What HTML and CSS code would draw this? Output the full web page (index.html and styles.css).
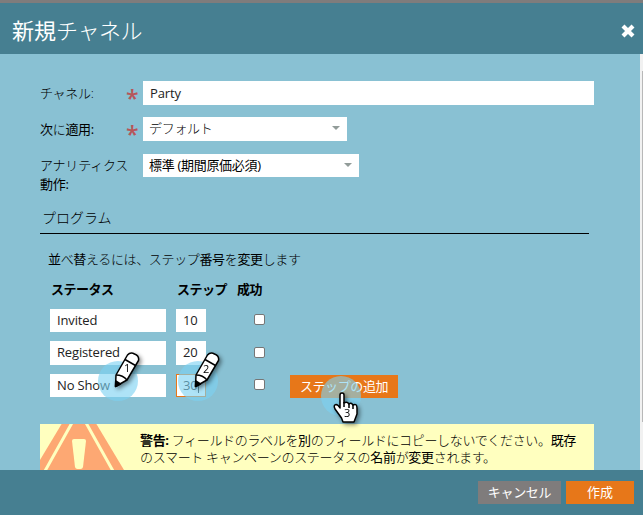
FILE: index.html
```html
<!DOCTYPE html>
<html lang="ja">
<head>
<meta charset="utf-8">
<title>新規チャネル</title>
<link rel="stylesheet" href="styles.css">
</head>
<body>
<div class="dialog">
  <header class="header">
    <h1>新規<span class="kana">チャネル</span></h1>
    <svg class="close" width="14" height="14" viewBox="0 0 14 14"><path d="M2 2l10 10M12 2l-10 10"/></svg>
  </header>
  <main class="body">
    <div class="row row-name"><label class="k">チャネル:</label><b class="star">*</b><div class="field latin">Party</div></div>
    <div class="row row-apply"><label>次<span class="kana">に</span>適用:</label><b class="star">*</b><div class="field select"><span class="k">デフォルト</span><i class="arrow"></i></div></div>
    <div class="row row-analytics"><label><span class="k wide">アナリティクス</span><br>動作:</label><b class="star"></b><div class="field select"><span class="behavior">標準 (期間原価必須)</span><i class="arrow"></i></div></div>
    <h2 class="k">プログラム</h2>
    <p class="hint">並<span class="kana">べ</span>替<span class="kana">えるには、ステップ</span>番号<span class="kana">を</span>変更<span class="kana">します</span></p>
    <div class="steps">
      <strong>ステータス</strong><strong>ステップ</strong><strong>成功</strong><span></span>
      <div class="field latin">Invited</div><div class="field latin num">10</div><i class="check"></i><span></span>
      <div class="field tall latin">Registered</div><div class="field tall latin num">20</div><i class="check low"></i><span></span>
      <div class="field latin">No Show</div><div class="field latin num focus">30<i class="caret"></i></div><i class="check"></i><div class="button add"><span>ステップの追加</span></div>
    </div>
    <div class="warning">
      <svg class="sign" width="90" height="46" viewBox="0 0 90 46"><path class="tri" d="M24 -4H54L84 46H-6Z"/><path class="inner" d="M5 47L33 -3M73 47L45 -3"/><path class="mark" d="M34 15H44Q46 15 46 17L43 43Q42.500 45 40.500 45H37.500Q35.500 45 35 43L32 17Q32 15 34 15Z"/></svg>
      <p><span class="line one"><b>警告:</b> <span class="kana">フィールドのラベルを</span>別<span class="kana">のフィールドにコピーしないでください。</span>既存</span><span class="line two"><span class="kana">のスマート キャンペーンのステータスの</span>名前<span class="kana">が</span>変更<span class="kana">されます。</span></span></p>
    </div>
    <div class="scroll"><i></i></div>
  </main>
  <footer class="footer"><div class="button cancel"><span>キャンセル</span></div><div class="button create"><span>作成</span></div></footer>
  <i class="halo h1"></i><i class="halo h2"></i><i class="halo h3"></i>
  <svg class="pencil p1" width="32" height="44" viewBox="0 0 32 44"><use href="#pen"/><text x="12" y="25">1</text></svg>
  <svg class="pencil p2" width="32" height="44" viewBox="0 0 32 44"><g id="pen"><path d="M3.500 39.500L4 28L15.500 8Q18.500 4.500 22.500 7Q27.500 9 26.500 13.500L15 33Z"/><path d="M13 12.500L23.500 18.500M4 28Q11 28 15 33"/><path class="tip" d="M3.500 39.500L3.700 34L8.500 37Z"/></g><text x="11" y="26">2</text></svg>
  <svg class="pencil hand" width="30" height="36" viewBox="0 0 30 36"><path d="M8 18V5Q8 3 10 3Q12 3 12 5V13Q15 11 17 14Q19 12 21 15Q25 13 25 18V24L22 32H11L9.500 28L3 19Q1 15 4 14.500Q6 14.500 8 18Z"/><path d="M12 12V17M17 14V18M21 15V19"/><text x="12" y="27">3</text></svg>
</div>
</body>
</html>
```

FILE: styles.css
```css
* { box-sizing: border-box; }
body { margin: 0; font: 13px/19px "Open Sans", "Noto Sans CJK JP", sans-serif; color: #000; }
h1, h2, p { margin: 0; font-weight: 400; white-space: nowrap; }
i { display: block; }
.dialog { position: relative; width: 643px; height: 515px; overflow: hidden; border-top: 3px solid #7f7c7c; background: #467f91; display: flex; flex-direction: column; }
.header { height: 51px; display: flex; align-items: center; justify-content: space-between; padding: 4px 8px 0 12px; color: #fff; }
h1 { font-size: 22px; line-height: 34px; margin-top: -2px; }
h1 .kana { letter-spacing: -.4px; }
.kana, .k { font-weight: 300; }
.close { stroke: #fff; stroke-width: 4.200; }
.body { position: relative; height: 416px; overflow: hidden; background: #89c1d3; padding: 27px 49px 0 40px; }
.row { display: grid; grid-template-columns: 86px 17px 1fr; }
.row label { padding-top: 3px; white-space: nowrap; letter-spacing: -.3px; }
.row .k { letter-spacing: -.3px; }
.row .wide { letter-spacing: -.2px; }
.row-name { height: 36px; grid-template-columns: 86px 17px 451px; }
.row-apply { height: 37px; grid-template-columns: 86px 17px 204px; }
.row-analytics { height: 53px; grid-template-columns: 86px 17px 216px; }
.row-analytics label { padding-top: 2px; }
.row-analytics .field { height: 23px; }
.row-apply .select .k { margin-top: -2px; }
.star { color: #b75559; font: 600 23px/35px "Open Sans", sans-serif; height: 24px; }
.field { height: 24px; line-height: 23px; background: #fff; padding: 0 7px; color: #222; white-space: nowrap; }
.row-name .field { line-height: 24px; }
.latin { letter-spacing: -.15px; }
.select { display: flex; align-items: center; justify-content: space-between; color: #000; padding-left: 6px; }
.behavior { letter-spacing: -.3px; }
.arrow { border: 4px solid transparent; border-top-color: #929c99; border-bottom: 0; margin-top: -2px; }
h2 { width: 549px; height: 27px; padding: 1px 2px 0; border-bottom: 1px solid #000; font-size: 14px; line-height: 19px; }
.hint { padding: 16px 8px 0; height: 46px; letter-spacing: -.35px; }
.steps { display: grid; grid-template-columns: 116px 30px 66px 108px; grid-template-rows: 29px 32px 33px 50px; column-gap: 10px; padding-left: 10px; }
.steps strong { white-space: nowrap; letter-spacing: -.5px; margin-left: 1px; }
.steps strong:nth-child(3) { margin-left: 21px; }
.steps .field { height: 23px; }
.steps .tall { height: 24px; }
.num.focus { position: relative; border: 1px solid #e77719; padding: 0 6px; line-height: 21px; }
.caret { position: absolute; left: 21px; top: 4px; width: 1px; height: 14px; background: #222; }
.check { width: 11px; height: 11px; margin: 5px 0 0 38px; border: 1px solid #767676; border-radius: 2px; background: #fff; }
.check.low { margin-top: 6px; }
.button { height: 23px; color: #fff; display: flex; align-items: center; justify-content: center; white-space: nowrap; background: #e77719; }
.add { margin-top: 1px; margin-left: -2px; width: 108px; letter-spacing: -.4px; }
.warning { width: 554px; height: 46px; overflow: hidden; display: flex; background: #ffffbf; }
.sign { flex: none; margin-right: 10px; }
.tri { fill: #fda873; }
.inner { fill: none; stroke: #ffffbf; stroke-width: 3; }
.mark { fill: #ffffbf; }
.warning p { padding-top: 8px; line-height: 17px; }
.line { display: block; }
.one { letter-spacing: -.34px; }
.two { letter-spacing: -.32px; }
.scroll { position: absolute; right: 0; top: 0; width: 3px; height: 416px; background: #f1f1f1; padding-top: 17px; }
.scroll i { width: 1px; height: 351px; background: #b8b8b8; margin-left: 2px; }
.footer { height: 45px; display: flex; justify-content: flex-end; gap: 5px; padding: 11px 9px 0; }
.cancel { width: 83px; background: #7f7c7c; letter-spacing: -.3px; }
.create { width: 68px; }
.halo { position: absolute; width: 40px; height: 40px; border-radius: 50%; background: #7dd2f2; opacity: .62; }
.h1 { left: 98px; top: 358px; }
.h2 { left: 178px; top: 358px; }
.h3 { left: 321px; top: 373px; }
.pencil { position: absolute; filter: drop-shadow(2px 2px 2px #0007); overflow: visible; }
.pencil path { fill: #fff; stroke: #000; stroke-width: 1.500; stroke-linejoin: round; }
.pencil .tip { fill: #000; }
.pencil text { font: 11px "Open Sans", sans-serif; }
.p1 { left: 112px; top: 344px; }
.p2 { left: 192px; top: 344px; }
.hand { left: 332px; top: 387px; }
```
